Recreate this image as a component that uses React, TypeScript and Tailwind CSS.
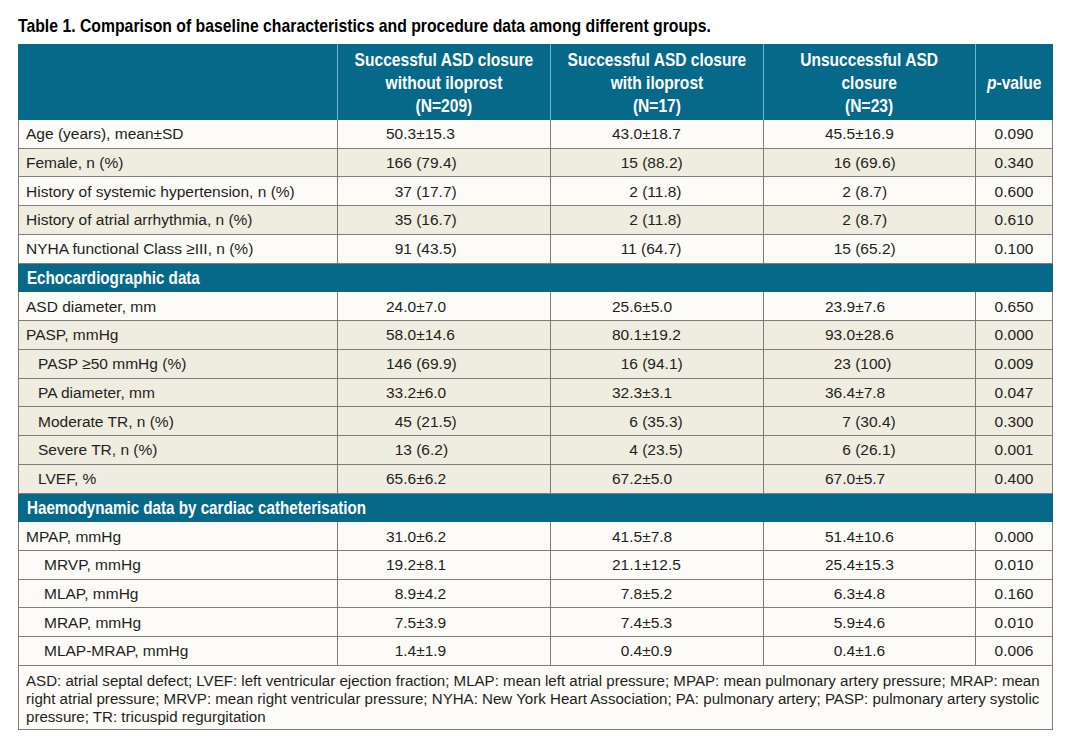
import React from "react";

type Row = { label: string; indent: 0 | 1 | 2; bg: "w" | "b"; v: [string, string, string, string] };

const bold = { fontFamily: "'Liberation Sans', Arial, sans-serif" };
const body = { fontFamily: "'Liberation Sans', Arial, sans-serif" };

const sec1: Row[] = [
  { label: "Age (years), mean±SD", indent: 0, bg: "w", v: ["50.3±15.3", "43.0±18.7", "45.5±16.9", "0.090"] },
  { label: "Female, n (%)", indent: 0, bg: "b", v: ["166 (79.4)", "_15 (88.2)", "_16 (69.6)", "0.340"] },
  { label: "History of systemic hypertension, n (%)", indent: 0, bg: "w", v: ["_37 (17.7)", "__2 (11.8)", "__2 (8.7)", "0.600"] },
  { label: "History of atrial arrhythmia, n (%)", indent: 0, bg: "b", v: ["_35 (16.7)", "__2 (11.8)", "__2 (8.7)", "0.610"] },
  { label: "NYHA functional Class ≥III, n (%)", indent: 0, bg: "w", v: ["_91 (43.5)", "_11 (64.7)", "_15 (65.2)", "0.100"] },
];

const sec2: Row[] = [
  { label: "ASD diameter, mm", indent: 0, bg: "w", v: ["24.0±7.0", "25.6±5.0", "23.9±7.6", "0.650"] },
  { label: "PASP, mmHg", indent: 0, bg: "b", v: ["58.0±14.6", "80.1±19.2", "93.0±28.6", "0.000"] },
  { label: "PASP ≥50 mmHg (%)", indent: 1, bg: "b", v: ["146 (69.9)", "_16 (94.1)", "_23 (100)", "0.009"] },
  { label: "PA diameter, mm", indent: 1, bg: "b", v: ["33.2±6.0", "32.3±3.1", "36.4±7.8", "0.047"] },
  { label: "Moderate TR, n (%)", indent: 1, bg: "b", v: ["_45 (21.5)", "__6 (35.3)", "__7 (30.4)", "0.300"] },
  { label: "Severe TR, n (%)", indent: 1, bg: "b", v: ["_13 (6.2)", "__4 (23.5)", "__6 (26.1)", "0.001"] },
  { label: "LVEF, %", indent: 1, bg: "b", v: ["65.6±6.2", "67.2±5.0", "67.0±5.7", "0.400"] },
];

const sec3: Row[] = [
  { label: "MPAP, mmHg", indent: 0, bg: "w", v: ["31.0±6.2", "41.5±7.8", "51.4±10.6", "0.000"] },
  { label: "MRVP, mmHg", indent: 2, bg: "w", v: ["19.2±8.1", "21.1±12.5", "25.4±15.3", "0.010"] },
  { label: "MLAP, mmHg", indent: 2, bg: "w", v: ["_8.9±4.2", "_7.8±5.2", "_6.3±4.8", "0.160"] },
  { label: "MRAP, mmHg", indent: 2, bg: "w", v: ["_7.5±3.9", "_7.4±5.3", "_5.9±4.6", "0.010"] },
  { label: "MLAP-MRAP, mmHg", indent: 2, bg: "w", v: ["_1.4±1.9", "_0.4±0.9", "_0.4±1.6", "0.006"] },
];

function Val({ s }: { s: string }) {
  const m = s.match(/^_*/);
  const n = m ? m[0].length : 0;
  return (
    <span className="whitespace-pre">
      {n > 0 && <span className="invisible">{"0".repeat(n)}</span>}
      {s.slice(n)}
    </span>
  );
}

function DataRow({ r }: { r: Row }) {
  const bg = r.bg === "w" ? "bg-[#fcfbf8]" : "bg-[#efece0]";
  const ind = r.indent === 0 ? "pl-[7px]" : r.indent === 1 ? "pl-[19px]" : "pl-[25px]";
  return (
    <div
      className={`grid h-[28.74px] grid-cols-[318px_213px_213px_212px_77px] border-x border-b border-[#7d7d7d] text-[15.5px] text-[#231f20] ${bg}`}
      style={body}
    >
      <div className={`flex items-center whitespace-nowrap ${ind}`}>{r.label}</div>
      <div className="flex items-center border-l border-[#7d7d7d] pl-[48px]"><Val s={r.v[0]} /></div>
      <div className="flex items-center border-l border-[#7d7d7d] pl-[61px]"><Val s={r.v[1]} /></div>
      <div className="flex items-center border-l border-[#7d7d7d] pl-[61px]"><Val s={r.v[2]} /></div>
      <div className="flex items-center justify-center border-l border-[#7d7d7d]">{r.v[3]}</div>
    </div>
  );
}

function Section({ title }: { title: string }) {
  return (
    <div
      className="flex h-[28.74px] items-center border-x border-[#06698a] bg-[#06698a] pl-[8px] text-[18.5px] font-bold whitespace-nowrap text-white"
      style={bold}
    >
      <span className="inline-block origin-left scale-x-[0.82]">{title}</span>
    </div>
  );
}

function Head({ lines }: { lines: string[] }) {
  return (
    <div className="flex items-center justify-center border-l border-[#6fb6d3] text-center whitespace-nowrap">
      <span className="inline-block origin-center scale-x-[0.82]">
        {lines.map((l, i) => (
          <React.Fragment key={i}>
            {i > 0 && <br />}
            {l}
          </React.Fragment>
        ))}
      </span>
    </div>
  );
}

export default function App() {
  return (
    <div className="min-h-[752px] w-[1072px] bg-white pl-[18px] pt-[15px]">
      <div className="h-[22px] text-[19px] leading-[22px] font-bold whitespace-nowrap text-black" style={bold}>
        <span className="inline-block origin-left scale-x-[0.83]">
          Table 1. Comparison of baseline characteristics and procedure data among different groups.
        </span>
      </div>
      <div className="mt-[7px] w-[1035px]">
        <div
          className="grid h-[76px] grid-cols-[318px_213px_213px_212px_77px] border-x border-[#06698a] bg-[#06698a] text-[19px] leading-[23px] font-bold text-white"
          style={bold}
        >
          <div />
          <Head lines={["Successful ASD closure", "without iloprost", "(N=209)"]} />
          <Head lines={["Successful ASD closure", "with iloprost", "(N=17)"]} />
          <Head lines={["Unsuccessful ASD", "closure", "(N=23)"]} />
          <div className="flex items-center justify-center border-l border-[#6fb6d3]">
            <span className="inline-block origin-center scale-x-[0.82]"><i>p</i>-value</span>
          </div>
        </div>
        {sec1.map((r) => <DataRow key={r.label} r={r} />)}
        <Section title="Echocardiographic data" />
        {sec2.map((r) => <DataRow key={r.label} r={r} />)}
        <Section title="Haemodynamic data by cardiac catheterisation" />
        {sec3.map((r) => <DataRow key={r.label} r={r} />)}
        <div
          className="border-x border-b border-[#7d7d7d] bg-[#fcfbf8] px-[7px] pt-[6px] pb-[3px] text-[15.1px] leading-[18px] whitespace-nowrap text-[#231f20]"
          style={body}
        >
          ASD: atrial septal defect; LVEF: left ventricular ejection fraction; MLAP: mean left atrial pressure; MPAP: mean pulmonary artery pressure; MRAP: mean
          <br />
          right atrial pressure; MRVP: mean right ventricular pressure; NYHA: New York Heart Association; PA: pulmonary artery; PASP: pulmonary artery systolic
          <br />
          pressure; TR: tricuspid regurgitation
        </div>
      </div>
    </div>
  );
}
